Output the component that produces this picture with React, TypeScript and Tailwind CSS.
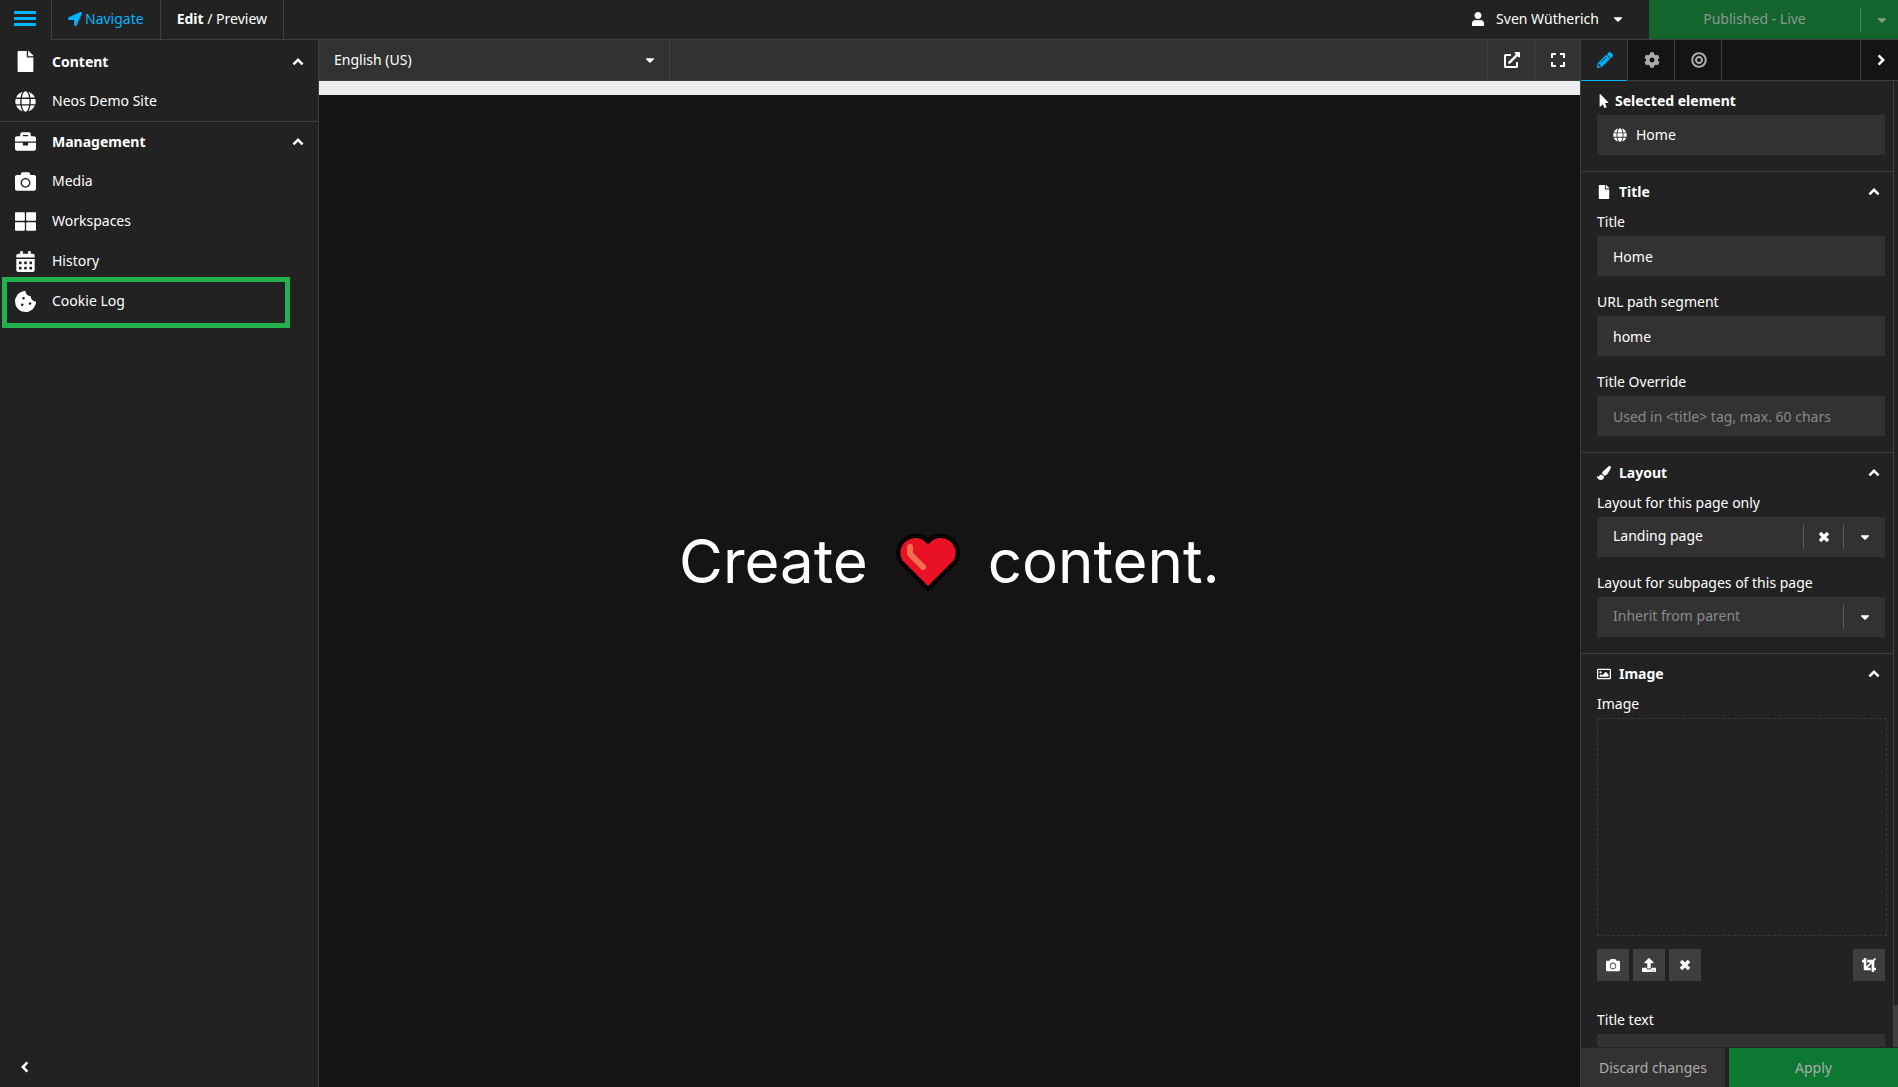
import React from 'react';
import {
  FaLocationArrow, FaFile, FaGlobe, FaBriefcase, FaCamera, FaThLarge, FaCalendarAlt, FaCookieBite,
  FaUser, FaCaretDown, FaExternalLinkAlt, FaExpand, FaPencilAlt, FaCog, FaBullseye, FaMousePointer,
  FaPaintBrush, FaRegImage, FaUpload, FaCrop,
} from 'react-icons/fa';

type Icon = React.ComponentType<{ className?: string }>;

function Chevron({ className }: { className?: string }) {
  return (
    <svg viewBox="0 0 12 12" className={`size-3 ${className ?? ''}`} fill="none" stroke="currentColor" strokeWidth="2.500" aria-hidden="true">
      <path d="M1.400 8.400L6 3.800l4.600 4.600" />
    </svg>
  );
}

function Cross({ className }: { className?: string }) {
  return (
    <svg viewBox="0 0 14 14" className={className} fill="none" stroke="currentColor" strokeWidth="3.400" aria-hidden="true">
      <path d="M3 3l8 8M11 3l-8 8" />
    </svg>
  );
}

function MenuGroup({ icon: Icon, title, children }: { icon: Icon; title: string; children: React.ReactNode }) {
  return (
    <section className="border-b border-[#3f3f3f] last-of-type:border-b-0">
      <button type="button" className="flex h-[39px] w-full items-center pr-3.5 pl-[15px] text-left font-bold">
        <Icon className="mr-4 size-[21px]" />
        <span className="flex-1">{title}</span>
        <Chevron />
      </button>
      <ul>{children}</ul>
    </section>
  );
}

function MenuItem({ icon: Icon, label, marked }: { icon: Icon; label: string; marked?: boolean }) {
  return (
    <li className="relative">
      <a href="#" className="flex h-10 items-center pl-[15px]">
        <Icon className="mr-4 size-[21px]" />
        {label}
      </a>
      {marked && <span className="pointer-events-none absolute -top-1 right-7 -bottom-[7px] left-0.5 border-[5px] border-[#22b14c]" />}
    </li>
  );
}

function Section({ icon: Icon, title, children }: { icon: Icon; title: string; children: React.ReactNode }) {
  return (
    <section className="border-t border-[#3f3f3f] pr-2 pb-4 pl-4">
      <button type="button" className="flex h-10 w-full items-center pr-[5px] text-left font-bold">
        <Icon className="mr-2 size-3.5" />
        <span className="flex-1">{title}</span>
        <Chevron />
      </button>
      <div className="flex flex-col gap-4">{children}</div>
    </section>
  );
}

function TextField({ id, label, value, placeholder }: { id: string; label: string; value?: string; placeholder?: string }) {
  return (
    <div>
      <label htmlFor={id} className="mb-1 block leading-5">{label}</label>
      <input
        id={id}
        type="text"
        defaultValue={value}
        placeholder={placeholder}
        className="block h-10 w-full bg-[#323232] px-4 outline-none placeholder:text-[#8a8a8a]"
      />
    </div>
  );
}

function SelectField({ id, label, value, empty }: { id: string; label: string; value: string; empty?: boolean }) {
  return (
    <div>
      <label htmlFor={id} className="mb-1 block leading-5">{label}</label>
      <div className="flex h-10 items-center bg-[#323232]">
        <select id={id} className={`h-10 min-w-0 flex-1 appearance-none bg-[#323232] pb-0.5 pl-4 outline-none ${empty ? 'text-[#8a8a8a]' : 'text-white'}`}>
          <option>{value}</option>
        </select>
        {!empty && (
          <button type="button" aria-label="Clear" className="flex h-6 w-10 items-center justify-center border-l border-[#5b5b5b]">
            <Cross className="size-3.5" />
          </button>
        )}
        <span className="flex h-6 w-[42px] items-center justify-center border-l border-[#5b5b5b] pl-px">
          <FaCaretDown className="size-3.5" />
        </span>
      </div>
    </div>
  );
}

function SmallButton({ icon: Icon, label }: { icon: Icon; label: string }) {
  return (
    <button type="button" aria-label={label} className="flex size-8 items-center justify-center bg-[#3f3f3f]">
      <Icon className="size-3.5" />
    </button>
  );
}

function Heart() {
  return (
    <svg viewBox="0 0 68 61" className="mx-[26px] h-[61px] w-[68px]" role="img" aria-label="love">
      <path
        d="M34 58L7 31A17 17 0 0 1 34 10.500A17 17 0 0 1 61 31Z"
        fill="#e81224" stroke="#000" strokeWidth="4.200" strokeLinejoin="miter"
      />
      <path d="M16 16v6q0 1 1 2l12 12" fill="none" stroke="#f07050" strokeWidth="6" strokeLinecap="round" strokeLinejoin="round" />
    </svg>
  );
}

export default function App() {
  return (
    <div className="flex h-screen flex-col overflow-hidden bg-[#222] font-['Noto_Sans','Open_Sans',sans-serif] text-sm text-white">
      <header className="flex h-10 shrink-0">
        <button type="button" aria-label="Menu" className="flex w-[51px] flex-col justify-center gap-[3px] pr-[15px] pb-[3px] pl-3.5">
          <span className="h-[3px] w-full bg-[#00b5ff]" />
          <span className="h-[3px] w-full bg-[#00b5ff]" />
          <span className="h-[3px] w-full bg-[#00b5ff]" />
        </button>
        <div className="flex flex-1 border-b border-l border-[#3f3f3f]">
          <button type="button" className="flex items-center gap-[3px] border-r border-[#3f3f3f] px-4 pb-0.5 text-[#00b5ff]">
            <FaLocationArrow className="size-3.5" />
            Navigate
          </button>
          <button type="button" className="border-r border-[#3f3f3f] px-4 pb-0.5">
            <b>Edit</b> / Preview
          </button>
          <button type="button" className="ml-auto flex items-center pr-6 pb-0.5">
            <FaUser className="mr-[11px] size-3.5" />
            Sven Wütherich
            <FaCaretDown className="ml-3 size-3.5" />
          </button>
          <div className="flex items-center bg-[#14642d] text-[#8a9a8f]">
            <button type="button" className="h-full w-[211px] pb-0.5">Published - Live</button>
            <button type="button" aria-label="Publish options" className="flex h-6 w-[38px] items-center justify-center border-l border-[#4a8a5e] pl-1">
              <FaCaretDown className="size-3.5" />
            </button>
          </div>
        </div>
      </header>

      <div className="flex min-h-0 flex-1">
        <nav className="flex w-[319px] shrink-0 flex-col border-r border-[#3f3f3f] pt-0.5">
          <MenuGroup icon={FaFile} title="Content">
            <MenuItem icon={FaGlobe} label="Neos Demo Site" />
          </MenuGroup>
          <MenuGroup icon={FaBriefcase} title="Management">
            <MenuItem icon={FaCamera} label="Media" />
            <MenuItem icon={FaThLarge} label="Workspaces" />
            <MenuItem icon={FaCalendarAlt} label="History" />
            <MenuItem icon={FaCookieBite} label="Cookie Log" marked />
          </MenuGroup>
          <button type="button" aria-label="Collapse menu" className="mt-auto flex h-[41px] w-[49px] items-center justify-center">
            <Chevron className="-rotate-90" />
          </button>
        </nav>

        <main className="flex min-w-0 flex-1 flex-col bg-[#141414]">
          <div className="flex h-[41px] shrink-0 border-b border-[#3f3f3f] bg-[#323232]">
            <div className="flex w-[351px] items-center border-r border-[#3f3f3f] pr-3">
              <select aria-label="Language" className="h-full flex-1 appearance-none bg-[#323232] pb-px pl-[15px] outline-none">
                <option>English (US)</option>
              </select>
              <FaCaretDown className="size-3.5" />
            </div>
            <button type="button" aria-label="Open in new window" className="ml-auto flex w-[47px] items-center justify-center border-l border-[#3f3f3f] pl-0.5">
              <FaExternalLinkAlt className="size-4" />
            </button>
            <button type="button" aria-label="Full screen" className="flex w-[46px] items-center justify-center border-l border-[#3f3f3f] pl-px">
              <FaExpand className="size-4" />
            </button>
          </div>
          <div className="h-3.5 shrink-0 bg-[#ececec]" />
          <div className="flex flex-1 items-center justify-center pb-15">
            <h1 className="flex items-center font-['Inter',sans-serif] text-[60px] leading-none">
              <span>Create</span>
              <Heart />
              <span>content.</span>
            </h1>
          </div>
        </main>

        <aside className="flex w-[318px] shrink-0 flex-col border-l border-[#3f3f3f]">
          <div className="flex h-[41px] shrink-0 bg-[#141414] text-[#adadad]">
            <button type="button" aria-label="Properties" className="flex w-[46px] items-center justify-center border-b border-[#00b5ff] bg-[#222] pl-0.5 text-[#00b5ff]">
              <FaPencilAlt className="size-4" />
            </button>
            <div className="flex flex-1 border-b border-[#3f3f3f]">
              <button type="button" aria-label="Settings" className="flex w-12 items-center justify-center border-x border-[#3f3f3f] pl-0.5">
                <FaCog className="size-4" />
              </button>
              <button type="button" aria-label="Target" className="flex w-[47px] items-center justify-center border-r border-[#3f3f3f] pl-0.5">
                <FaBullseye className="size-4" />
              </button>
              <button type="button" aria-label="Collapse inspector" className="ml-auto flex w-[38px] items-center justify-center border-l border-[#3f3f3f] pl-0.5 text-white">
                <Chevron className="rotate-90" />
              </button>
            </div>
          </div>

          <div className="flex min-h-0 flex-1">
            <div className="min-w-0 flex-1 overflow-hidden border-r border-[#3f3f3f]">
              <section className="pt-2.5 pr-2 pb-4 pl-4">
                <h2 className="mb-1 flex items-center gap-1 leading-5 font-bold">
                  <FaMousePointer className="size-3.5" />
                  Selected element
                </h2>
                <div className="flex h-10 items-center gap-[9px] bg-[#323232] px-4">
                  <FaGlobe className="size-3.5" />
                  Home
                </div>
              </section>
              <Section icon={FaFile} title="Title">
                <TextField id="title" label="Title" value="Home" />
                <TextField id="segment" label="URL path segment" value="home" />
                <TextField id="override" label="Title Override" placeholder="Used in <title> tag, max. 60 chars" />
              </Section>
              <Section icon={FaPaintBrush} title="Layout">
                <SelectField id="layout" label="Layout for this page only" value="Landing page" />
                <SelectField id="sublayout" label="Layout for subpages of this page" value="Inherit from parent" empty />
              </Section>
              <Section icon={FaRegImage} title="Image">
                <div>
                  <p className="mb-1 leading-5">Image</p>
                  <div className="-mr-0.5 h-[218px] border border-dashed border-[#3a3a3a]" />
                  <div className="mt-[13px] flex gap-1">
                    <SmallButton icon={FaCamera} label="Media browser" />
                    <SmallButton icon={FaUpload} label="Upload" />
                    <SmallButton icon={Cross} label="Remove" />
                    <div className="ml-auto">
                      <SmallButton icon={FaCrop} label="Crop" />
                    </div>
                  </div>
                </div>
                <div className="pt-[13px]">
                  <TextField id="titletext" label="Title text" />
                </div>
              </Section>
            </div>
            <div className="flex w-1 flex-col justify-end">
              <div className="h-[42px] bg-[#3f3f3f]" />
            </div>
          </div>
          <div className="flex h-10 shrink-0 gap-1 pt-px text-[#adadad]">
            <button type="button" className="w-36 bg-[#323232]">Discard changes</button>
            <button type="button" className="flex-1 bg-[#0d7831]">Apply</button>
          </div>
        </aside>
      </div>
    </div>
  );
}
